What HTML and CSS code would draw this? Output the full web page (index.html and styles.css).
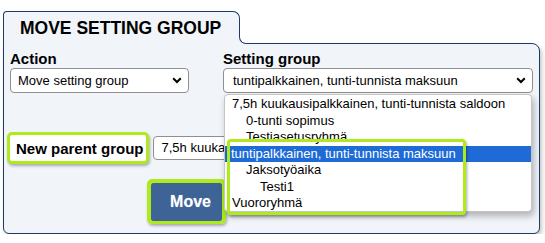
FILE: index.html
```html
<!DOCTYPE html>
<html>
<head>
<meta charset="utf-8">
<link rel="stylesheet" href="styles.css">
</head>
<body>
<div class="page">
  <div class="tab">MOVE SETTING GROUP</div>
  <div class="panel">
    <div class="row1">
      <div class="field field-action">
        <div class="label">Action</div>
        <div class="select">
          <span class="sel-text">Move setting group</span>
          <svg class="chev" width="10" height="7" viewBox="0 0 10 7"><path d="M1.2 1.3 L5 5 L8.8 1.3" fill="none" stroke="#000" stroke-width="2"/></svg>
        </div>
      </div>
      <div class="field field-setting">
        <div class="label">Setting group</div>
        <div class="select">
          <span class="sel-text">tuntipalkkainen, tunti-tunnista maksuun</span>
          <svg class="chev" width="10" height="7" viewBox="0 0 10 7"><path d="M1.2 1.3 L5 5 L8.8 1.3" fill="none" stroke="#000" stroke-width="2"/></svg>
        </div>
        <div class="dropdown">
          <div class="opt">7,5h kuukausipalkkainen, tunti-tunnista saldoon</div>
          <div class="opt lvl1">0-tunti sopimus</div>
          <div class="opt lvl1">Testiasetusryhmä</div>
          <div class="opt selected">tuntipalkkainen, tunti-tunnista maksuun</div>
          <div class="opt lvl1">Jaksotyöaika</div>
          <div class="opt lvl2">Testi1</div>
          <div class="opt">Vuororyhmä</div>
          <div class="hl-box"></div>
        </div>
      </div>
    </div>
    <div class="row2">
      <div class="label label-frame">New parent group</div>
      <div class="select select-parent">
        <span class="sel-text">7,5h kuukausipalkkainen, tunti-tunnista saldoon</span>
      </div>
    </div>
    <div class="row3">
      <div class="btn-frame"><button class="move">Move</button></div>
    </div>
  </div>
</div>
</body>
</html>
```
FILE: styles.css
```css
* { box-sizing: border-box; }

body {
  margin: 0;
  background: #ffffff;
  font-family: "Liberation Sans", Arial, sans-serif;
  color: #000;
}

.page {
  padding: 11px 0 0 3px;
  width: 545px;
}

.tab {
  position: relative;
  z-index: 2;
  display: block;
  width: 237px;
  margin-bottom: -1px;
  padding: 6px 10px 6px 16px;
  border: 1px solid #1c3b6a;
  border-bottom: 0;
  border-radius: 4px 7px 0 0;
  background: #f1f4f9;
  font-weight: bold;
  font-size: 17.5px;
  line-height: 20px;
  white-space: nowrap;
}

.tab::before,
.tab::after {
  content: "";
  position: absolute;
  left: 100%;
  bottom: 0;
  width: 7px;
  height: 7px;
}

.tab::before {
  background: #f1f4f9;
}

.tab::after {
  background: #ffffff;
  border-left: 1px solid #1c3b6a;
  border-bottom: 1px solid #1c3b6a;
  border-bottom-left-radius: 7px;
}

.panel {
  position: relative;
  width: 537px;
  border: 1px solid #1c3b6a;
  border-radius: 0 8px 6px 6px;
  background: #f1f4f9;
  padding: 6px 6px 9px 6px;
  box-shadow: 2px 3px 4px rgba(0, 0, 0, 0.22);
}

.label {
  font-weight: bold;
  font-size: 15px;
  line-height: 17px;
  white-space: nowrap;
}

.row1 {
  position: relative;
  z-index: 3;
  display: flex;
  gap: 34px;
}

.field-action { width: 179px; }
.field-setting { position: relative; width: 310px; }

.field .select { margin-top: 1px; }

.select {
  display: flex;
  align-items: center;
  justify-content: space-between;
  height: 25px;
  padding: 0 6px 0 7px;
  background: #fff;
  border: 1px solid #8f8f8f;
  border-radius: 4px;
  font-size: 13px;
  line-height: 16px;
  white-space: nowrap;
  overflow: hidden;
}

.field-setting .select { padding-left: 9px; }

.chev { flex: none; }

.dropdown {
  position: absolute;
  left: 1px;
  top: 44px;
  width: 308px;
  height: 118px;
  padding-top: 1px;
  background: #fff;
  border: 1px solid #c4c4c4;
  border-radius: 4px;
  box-shadow: 2px 4px 7px rgba(0, 0, 0, 0.28);
  font-size: 13px;
}

.opt {
  height: 16.5px;
  line-height: 16px;
  padding-left: 7px;
  white-space: nowrap;
}

.opt.lvl1 { padding-left: 21px; }
.opt.lvl2 { padding-left: 35px; }

.opt.selected {
  background: #1e6ad6;
  color: #fff;
  padding-left: 6px;
}

.hl-box {
  position: absolute;
  left: 2px;
  top: 44px;
  width: 239px;
  height: 76px;
  border: 3px solid #aeea1c;
  border-radius: 4px;
  box-shadow: 1px 2px 3px rgba(0, 0, 0, 0.35);
}

.row2 {
  display: flex;
  align-items: center;
  gap: 4px;
  margin-top: 39px;
  margin-left: -3px;
}

.label-frame {
  padding: 4.5px 2px 4.5px 6px;
  background: #fff;
  border: 3px solid #aeea1c;
  border-radius: 5px;
  box-shadow: 1px 2px 3px rgba(0, 0, 0, 0.3);
}

.select-parent {
  width: 240px;
  height: 24px;
  padding-left: 8px;
}

.row3 {
  margin-top: 15px;
  margin-left: 137px;
}

.btn-frame {
  display: inline-block;
  border: 4px solid #aeea1c;
  border-bottom-width: 3px;
  border-radius: 5px;
  box-shadow: 1px 2px 3px rgba(0, 0, 0, 0.3);
  line-height: 0;
}

.move {
  width: 71px;
  height: 38px;
  margin: 0;
  padding: 0 0 0 8px;
  border: 0;
  border-radius: 2px;
  background: #3d6397;
  color: #fff;
  font-family: "Liberation Sans", Arial, sans-serif;
  font-weight: bold;
  font-size: 16px;
  text-shadow: 0 0 1px rgba(255, 255, 255, 0.4);
}
```
